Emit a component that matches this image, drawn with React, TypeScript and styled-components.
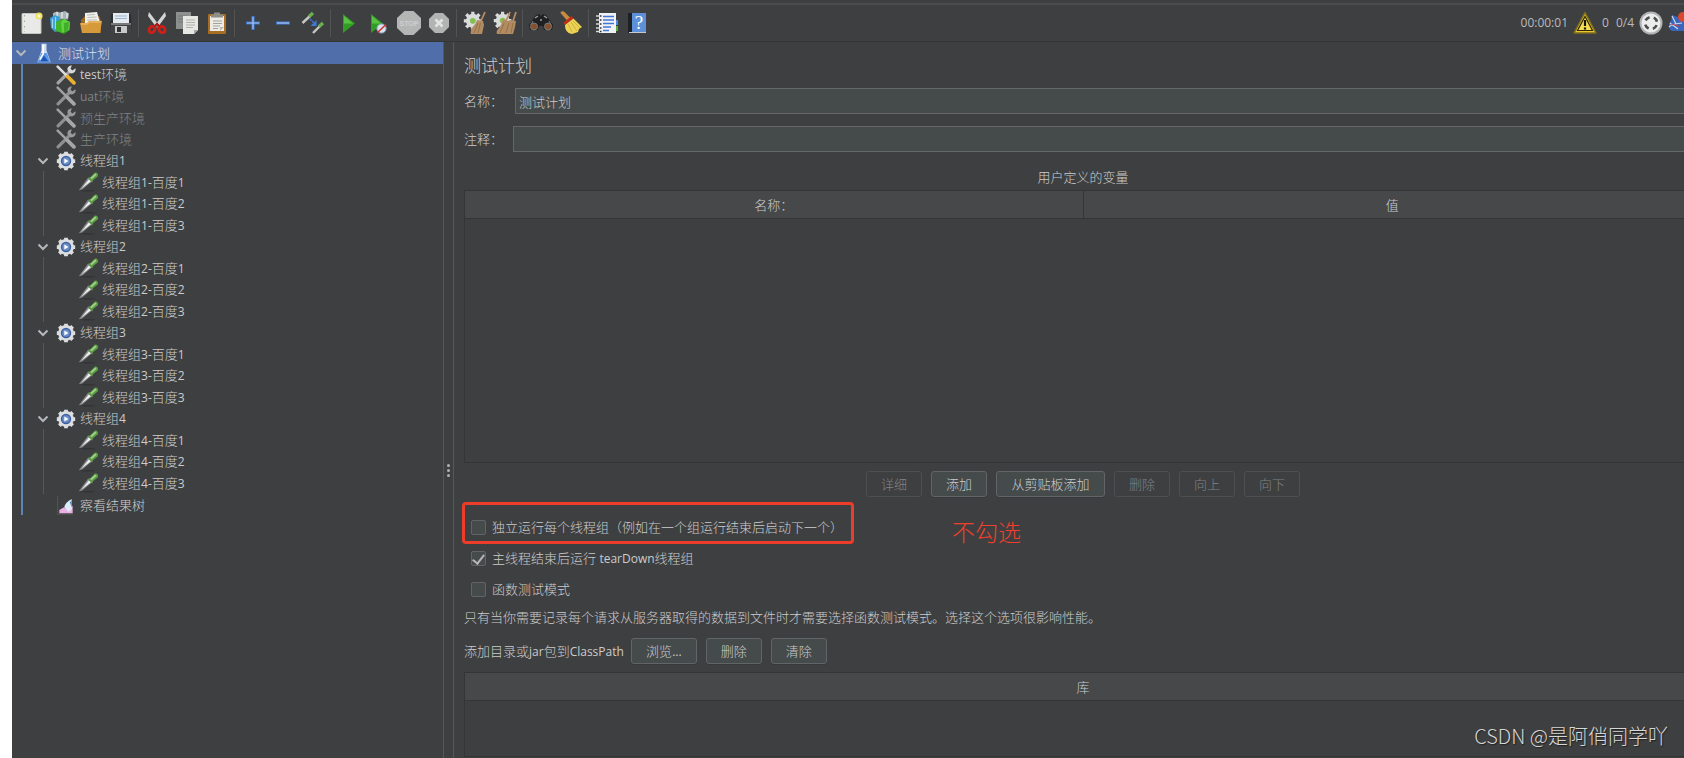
import React from "react";
import styled, { createGlobalStyle, css } from "styled-components";

const sans = '"Open Sans", "Noto Sans CJK SC", sans-serif';
const ink = "#cccccc";
const dim = "#808386";
const line = "#55585a";
const edge = "#333537";
const panel = "#3e3f41";
const field = "#454a4b";

const Global = createGlobalStyle`
  * { box-sizing: border-box; }
  html, body { margin: 0; background: #ffffff; }
  body { font: 300 13px/20px ${sans}; color: ${ink}; }
  button, input { font: inherit; color: inherit; }
`;

const Page = styled.div`
  min-height: 100vh;
  padding-left: 12px;
  display: flex;
  overflow: hidden;
`;

const Window = styled.div`
  position: relative;
  flex: 1;
  min-width: 0;
  display: flex;
  flex-direction: column;
  background: ${panel};
  overflow: hidden;
`;

const Toolbar = styled.header`
  display: flex;
  align-items: center;
  gap: 4px;
  height: 39px;
  margin-top: 3px;
  padding-left: 6px;
  border-top: 2px solid #4b4c4e;
  border-bottom: 1px solid ${edge};
`;

const ToolButton = styled.button`
  display: flex;
  align-items: center;
  justify-content: center;
  width: 26px;
  height: 28px;
  flex: none;
  padding: 0;
  border: 0;
  background: none;
`;

const Separator = styled.span`
  width: 2px;
  height: 28px;
  flex: none;
  border-left: 1px solid #515355;
`;

const Status = styled.div`
  display: flex;
  align-items: center;
  gap: 5px;
  flex: none;
  margin-left: auto;
  margin-right: -8px;
  font-weight: 400;
  font-size: 12px;
  color: #bbbbbb;
`;

const Threads = styled.span`
  margin-left: 2px;
`;

const Workspace = styled.div`
  flex: 1;
  display: flex;
  min-height: 0;
`;

const Tree = styled.ul`
  width: 431px;
  flex: none;
  margin: 0;
  padding: 0;
  list-style: none;
  display: grid;
  grid-auto-rows: 22px 21px;
  align-content: start;
`;

const TreeRow = styled.li<{ $selected?: boolean; $disabled?: boolean }>`
  display: flex;
  align-items: stretch;
  white-space: nowrap;
  background: ${(p) => (p.$selected ? "#506ea9" : "transparent")};
  color: ${(p) => (p.$disabled ? dim : p.$selected ? "#dde1e8" : ink)};
`;

const Guide = styled.span<{ $main?: boolean }>`
  width: 13px;
  margin-left: 9px;
  flex: none;
  border-left: ${(p) => (p.$main ? "2px solid #5d83b8" : "1px solid #55585a")};
`;

const Toggle = styled.button`
  width: 18px;
  flex: none;
  padding: 0;
  border: 0;
  background: none;
  display: flex;
  align-items: center;
  justify-content: center;
`;

const ToggleGap = styled.span`
  width: 18px;
  flex: none;
`;

const NodeIcon = styled.span`
  width: 20px;
  margin: 0 4px;
  flex: none;
  display: flex;
  align-items: center;
  justify-content: center;
`;

const NodeLabel = styled.span`
  align-self: center;
`;

const Divider = styled.div`
  width: 11px;
  flex: none;
  display: flex;
  flex-direction: column;
  align-items: center;
  gap: 2px;
  padding-top: 422px;
  border-left: 1px solid ${line};
  border-right: 1px solid ${line};
`;

const Dot = styled.span`
  width: 3px;
  height: 3px;
  border-radius: 50%;
  background: #b0b1b2;
`;

const Main = styled.main`
  position: relative;
  flex: 1;
  min-width: 0;
  display: flex;
  flex-direction: column;
  padding: 12px 0 2px 10px;
  margin-right: -18px;
`;

const Title = styled.h1`
  margin: 0 0 10px;
  font-size: 17px;
  line-height: 24px;
  font-weight: 300;
`;

const FieldRow = styled.div<{ $inset: number }>`
  display: grid;
  grid-template-columns: ${(p) => p.$inset}px 1fr;
  align-items: center;
  margin-bottom: 12px;
`;

const TextInput = styled.input`
  width: 100%;
  height: 26px;
  padding: 0 3px;
  background: ${field};
  border: 1px solid #646668;
  outline: 0;
`;

const TableFrame = styled.div<{ $grow?: boolean }>`
  border: 1px solid ${edge};
  ${(p) =>
    p.$grow
      ? css`
          flex: 1;
          min-height: 85px;
        `
      : css`
          height: 273px;
        `}
`;

const Table = styled.table`
  width: 100%;
  border-collapse: collapse;
  table-layout: fixed;
`;

const Head = styled.th`
  height: 27px;
  padding: 2px 0 0;
  font-weight: 300;
  background: #47484a;
  border-bottom: 1px solid ${edge};
  & + & {
    border-left: 1px solid ${edge};
  }
`;

const VariablesTitle = styled.h2`
  margin: 2px 0;
  font-size: 13px;
  line-height: 22px;
  font-weight: 300;
  text-align: center;
`;

const Actions = styled.div`
  display: flex;
  justify-content: center;
  gap: 9px;
  margin-top: 8px;
`;

const Button = styled.button<{ $width?: number }>`
  width: ${(p) => p.$width ?? 56}px;
  height: 26px;
  padding: 0;
  border: 1px solid #626567;
  border-radius: 3px;
  background: ${field};
  box-shadow: 0 1px 0 #37393b;
  line-height: 24px;
  &:disabled {
    color: ${dim};
    background: none;
    border-color: #4d4f51;
    box-shadow: none;
  }
`;

const Options = styled.div`
  display: flex;
  flex-direction: column;
  align-items: flex-start;
  margin-top: 5px;
`;

const Highlight = styled.div`
  display: flex;
  align-items: flex-end;
  width: 392px;
  height: 42px;
  margin-left: -2px;
  padding: 0 0 4px 6px;
  border: 3px solid #ee3c2b;
  border-radius: 4px;
`;

const Option = styled.label`
  display: flex;
  align-items: center;
  gap: 6px;
  height: 20px;
  white-space: nowrap;
`;

const PlainOption = styled(Option)`
  margin: 4px 0 0 7px;
  & + & {
    margin-top: 11px;
  }
`;

const Checkbox = styled.input`
  appearance: none;
  display: flex;
  justify-content: center;
  width: 15px;
  height: 15px;
  margin: 0;
  background: ${field};
  border: 1px solid #626567;
  border-radius: 2px;
  &:checked::after {
    content: "";
    width: 5px;
    height: 10px;
    border: solid #b4b6b7;
    border-width: 0 2px 2px 0;
    transform: rotate(38deg);
  }
`;

const Note = styled.p`
  margin: 8px 0 11px;
`;

const ClassPath = styled.div`
  display: flex;
  align-items: center;
  gap: 9px;
  margin-bottom: 8px;
`;

const ClassPathLabel = styled.span`
  margin-right: -2px;
`;

const Annotation = styled.span`
  position: absolute;
  left: 498px;
  top: 476px;
  font-size: 23px;
  line-height: 28px;
  font-weight: 300;
  color: #f0402c;
`;

const Watermark = styled.span`
  position: absolute;
  right: 16px;
  bottom: 9px;
  font: 300 20px/28px "Noto Sans CJK SC", sans-serif;
  color: #d6d6d6;
  text-shadow: 1px 1px 1px #222222;
`;

const Latin = styled.span`
  font-size: 12px;
  font-weight: 400;
`;

/* Latin letters and digits are set one size smaller than the Chinese text. */
function Mixed({ children }: { children: string }) {
  return (
    <>
      {children
        .split(/([A-Za-z0-9.-]+)/)
        .filter(Boolean)
        .map((part, i) => (/^[A-Za-z0-9.-]/.test(part) ? <Latin key={i}>{part}</Latin> : part))}
    </>
  );
}

const Svg = ({ size = 24, children }: { size?: number; children: React.ReactNode }) => (
  <svg width={size} height={size} viewBox="0 0 24 24" fill="none" aria-hidden="true">
    {children}
  </svg>
);

const NewIcon = () => (
  <Svg>
    <rect x="3" y="2.500" width="19" height="20" rx=".6" fill="#e9eae7" stroke="#c4c5c0" />
    <path d="M5.500 4v17" stroke="#a9aaa6" strokeDasharray="1.500 4" />
    <circle cx="20" cy="5" r="3.600" fill="#ecdf62" />
    <circle cx="20" cy="5" r="1.600" fill="#fffbd0" />
  </Svg>
);
const TemplatesIcon = () => (
  <Svg>
    <path d="M4 2l4-1.500 3 1 5-1.500 4 2.500-1 6H4z" fill="#a9b4b8" />
    <path d="M8 1v6M13 1v6M18 2v5" stroke="#dde3e4" strokeWidth="1.500" />
    <path d="M1 7l5-3 5 2v13l-5 2-4-4z" fill="#3aa0d8" />
    <path d="M3.500 8v9M6.500 6v12" stroke="#9bd8f4" strokeWidth="1.200" />
    <path d="M7 11l7-3 7 3v8l-6 4-8-3z" fill="#2d9a1f" />
    <path d="M7 11l7-3v14l-7-2z" fill="#43b52b" />
    <path d="M12 11l3-3 6 3-1 8-7 3z" fill="#62d13f" />
    <path d="M15 12l5-1-1 8-4 2z" fill="#3fae29" />
  </Svg>
);
const OpenIcon = () => (
  <Svg>
    <path d="M2 9l4-4h14l2 5v12H3z" fill="#9a6b24" />
    <path d="M6 2l12-1 3 11-15 1z" fill="#f1f1ee" />
    <path d="M8 4l8-.5M8.500 6.500l9-.5M8 9h10" stroke="#b9b9b5" />
    <path d="M1 12h7l2-2h13l-2 12H3z" fill="#d79a3b" />
    <path d="M2 13h6.500l2-2H22" stroke="#f2c67a" />
  </Svg>
);
const SaveIcon = () => (
  <Svg>
    <path d="M2 3h20l1 19H1z" fill="#2d2e30" />
    <path d="M2 13h20l1 9H1z" fill="#404244" />
    <path d="M4 2h16v10H4z" fill="#e4eaf0" />
    <path d="M6 5h12M6 7.500h12" stroke="#9db5cc" />
    <path d="M2 12h20v2H2z" fill="#77797b" />
    <path d="M6 15h12v7H6z" fill="#c8c9ca" />
    <path d="M8 16h4v5H8z" fill="#333333" />
  </Svg>
);
const CutIcon = () => (
  <Svg>
    <path d="M4 1l10 13-2.500 2.500L3 5zM20 1L10 14l2.500 2.500L21 5z" fill="#d3d5d5" />
    <ellipse cx="7" cy="18.500" rx="2.800" ry="3.400" transform="rotate(40 7 18.500)" stroke="#cf2018" strokeWidth="2.800" />
    <ellipse cx="17" cy="18.500" rx="2.800" ry="3.400" transform="rotate(-40 17 18.500)" stroke="#cf2018" strokeWidth="2.800" />
    <path d="M9 16l3-3 3 3" stroke="#b21912" strokeWidth="2" />
  </Svg>
);
const CopyIcon = () => (
  <Svg>
    <path d="M1 1h15v17H1z" fill="#8e9090" />
    <path d="M3 5h9M3 8h6M3 11h6" stroke="#747676" />
    <path d="M8 5h15v14l-4 4H8z" fill="#e6e6e3" />
    <path d="M11 9h9M11 11.500h9M11 14h9M11 16.500h7" stroke="#b0b1af" />
    <path d="M19 23v-4h4z" fill="#a8a9a7" />
  </Svg>
);
const PasteIcon = () => (
  <Svg>
    <rect x="3" y="3" width="18" height="20" rx="1" fill="#a86f22" />
    <path d="M5 5h14v15H5z" fill="#ecebe6" />
    <path d="M9 1.500h6v2h3v3H6v-3h3z" fill="#8d8f86" />
    <path d="M8 10h9M8 12.500h9M8 15h7M8 17.500h5" stroke="#a3a39d" />
    <path d="M15 20v-4h4z" fill="#b9b8b2" />
  </Svg>
);
const PlusIcon = () => (
  <Svg>
    <path d="M12 5v14M5 12h14" stroke="#3d73c8" strokeWidth="3.200" />
    <path d="M12 6v12M6 12h12" stroke="#a8c6f0" strokeWidth="1.200" />
  </Svg>
);
const MinusIcon = () => (
  <Svg>
    <path d="M5 12h14" stroke="#3d73c8" strokeWidth="3.200" />
    <path d="M6 12h12" stroke="#a8c6f0" strokeWidth="1.200" />
  </Svg>
);
const ToggleIcon = () => (
  <Svg>
    <path d="M1.500 12L9 5" stroke="#c4c7c4" strokeWidth="2.400" />
    <path d="M8 5.500L12 2" stroke="#69b04e" strokeWidth="3.400" />
    <path d="M12 22l7-7" stroke="#c4c7c4" strokeWidth="2.400" />
    <path d="M18 15.500l4-3.500" stroke="#69b04e" strokeWidth="3.400" />
    <path d="M9 8l5 5" stroke="#3b7ae0" strokeWidth="1.500" strokeDasharray="2 1" />
    <path d="M15.500 9v6h-6z" fill="#3b7ae0" />
  </Svg>
);
const StartIcon = () => (
  <Svg>
    <path d="M6 3l12 9.500L6 22z" fill="#2f9e22" />
    <path d="M7 5l9 7.500H7z" fill="#59c143" />
  </Svg>
);
const StartNoPauseIcon = () => (
  <Svg>
    <path d="M4 3l12 9.500L4 22z" fill="#2f9e22" />
    <path d="M5 5l9 7.500H5z" fill="#59c143" />
    <circle cx="14.500" cy="17.500" r="4.600" fill="#d7e1ee" stroke="#89a3c4" />
    <path d="M10.500 21.500l8.500-8" stroke="#d22d22" strokeWidth="1.500" />
  </Svg>
);
const StopText = styled.text`
  font: 700 7px "Liberation Sans", sans-serif;
`;
const StopIcon = () => (
  <Svg>
    <path d="M7.500 0h9L24 7v10l-7.500 7h-9L0 17V7z" fill="#b4b5b5" />
    <StopText x="12" y="14.500" textAnchor="middle" fill="#cfcfcf">
      STOP
    </StopText>
  </Svg>
);
const ShutdownIcon = () => (
  <Svg>
    <path d="M8 2h8l6 6v8l-6 6H8l-6-6V8z" fill="#b2b3b3" />
    <path d="M8.500 8.500l7 7M15.500 8.500l-7 7" stroke="#e3e3e3" strokeWidth="2.600" />
  </Svg>
);
const gearTeeth = "M18 12h5M16 16l4 4M12 18v5M8 16l-4 4M6 12H1M8 8L4 4M12 6V1M16 8l4-4";
const ClearIcon = () => (
  <Svg>
    <g transform="scale(.82)">
      <path d={gearTeeth} stroke="#dadbdb" strokeWidth="4" />
      <circle cx="12" cy="12" r="8.500" fill="#dadbdb" />
      <circle cx="12" cy="12" r="3.500" fill="#84bf52" />
    </g>
    <path d="M22 1l-4 9" stroke="#b98c5c" strokeWidth="1.800" />
    <path d="M14 9l6 1 1 4-2 9H8c-1-1 0-4 1-6 2-3 4-4 5-8z" fill="#b18c62" />
    <path d="M15 12l-4 10M17.500 12L15 22" stroke="#94714b" />
  </Svg>
);
const ClearAllIcon = () => (
  <Svg>
    <g transform="scale(.8)">
      <path d={gearTeeth} stroke="#dadbdb" strokeWidth="4" />
      <circle cx="12" cy="12" r="8.500" fill="#dadbdb" />
      <circle cx="12" cy="12" r="3.500" fill="#84bf52" />
    </g>
    <path d="M17 1l-4 9M23 1l-3 9" stroke="#b98c5c" strokeWidth="1.800" />
    <path d="M10 8l5 2 2-1 6 1-1 6-2 7H4c-1-2 0-4 2-6 2-3 3-5 4-9z" fill="#b18c62" />
    <path d="M11 12L7 22M16 12l-3 10M20 12l-2 10" stroke="#94714b" />
  </Svg>
);
const SearchIcon = () => (
  <Svg>
    <path d="M7 4l3-1 2 2 2-2 3 1 7 10-1 5h-8l-1-4h-4l-1 4H1l-1-5z" fill="#1f2021" />
    <path d="M6 7l3-2M15 5l3 2M11 9h2" stroke="#9a9c9e" strokeWidth="1.500" />
    <path d="M4 10l-2 4M20 10l2 4" stroke="#696b6d" strokeWidth="1.200" />
    <circle cx="5" cy="15.500" r="3.500" fill="#87502c" stroke="#77797b" />
    <circle cx="19" cy="15.500" r="3.500" fill="#87502c" stroke="#77797b" />
  </Svg>
);
const BroomIcon = () => (
  <Svg>
    <path d="M1.500 2c0-2 3-2 4-1l6 6-3 3z" fill="#c98a42" />
    <path d="M4.500 11.500L12.500 5l2 2.500L6 14z" fill="#c22c1b" />
    <path d="M6 14l8.500-6.500L23 16l-3 2-1 3-6 2c-5-1-7-4-7-9z" fill="#ecd353" />
    <path d="M9 13l4 8M12 11l6 9M14 10l7 7" stroke="#d0b03c" />
  </Svg>
);
const FunctionIcon = () => (
  <Svg>
    <path d="M20 9h3v5h-3z" fill="#4a87e0" />
    <path d="M20 15h3v5h-3z" fill="#53ae3c" />
    <path d="M4 2h17v20H4z" fill="#f0f2f5" />
    <path d="M8 5.500h11M8 9h11M8 12.500h11M8 16h8M8 19.500h6" stroke="#4176d4" strokeWidth="1.500" />
    <path d="M1 5h5M1 9h5M1 13h5M1 17h5M1 20.500h5" stroke="#d7d8d9" strokeWidth="1.500" />
    <path d="M5 5h1.500M5 9h1.500M5 13h1.500M5 17h1.500M5 20.500h1.500" stroke="#333537" strokeWidth="1.500" />
  </Svg>
);
const HelpText = styled.text`
  font: 400 19px "Liberation Serif", serif;
`;
const HelpIcon = () => (
  <Svg>
    <path d="M3 2h17l1 20H3z" fill="#1d2024" />
    <path d="M7 2h14v20H7z" fill="#5c90d9" />
    <path d="M4 21.500h17" stroke="#c4cad2" />
    <HelpText x="14" y="18" textAnchor="middle" fill="#ffffff">
      ?
    </HelpText>
  </Svg>
);
const WarningIcon = () => (
  <Svg>
    <path d="M12 1.500l11 20.500H1z" fill="#e9c72f" stroke="#7d6d1c" strokeWidth="1.500" strokeLinejoin="round" />
    <path d="M12 5.500l7.500 14h-15z" fill="#f4dc55" stroke="#2c2708" strokeWidth="1.200" />
    <path d="M12 9v6M12 16.500v2" stroke="#171505" strokeWidth="2.200" />
  </Svg>
);
const TargetIcon = () => (
  <Svg>
    <circle cx="12" cy="12" r="11.500" fill="#b1b2b2" />
    <circle cx="12" cy="12" r="9.500" fill="#ececec" />
    <circle cx="12" cy="12" r="6" stroke="#4a4b4c" strokeWidth="2.600" strokeDasharray="5 4.425" strokeDashoffset="-2.200" />
  </Svg>
);
const RemoteIcon = () => (
  <Svg>
    <path d="M4 4l9 3 8 6-5 7H4c-4-2-4-8-1-10z" fill="#3866bd" />
    <path d="M4 5l4 8M1 16c4-4 8-3 13-4M2 12l8 6" stroke="#c9d8ef" strokeWidth="1.200" />
    <path d="M3 13l8 2" stroke="#cc4444" strokeWidth="1.200" />
    <circle cx="15" cy="6" r="5" fill="#d9472f" />
  </Svg>
);

const ChevronIcon = () => (
  <Svg size={12}>
    <path d="M3 7l9 9 9-9" stroke="#b5b8ba" strokeWidth="4" />
  </Svg>
);
const FlaskIcon = () => (
  <Svg size={20}>
    <path d="M9 1h6v8l5 14H4L9 9z" fill="#d3deed" />
    <path d="M8.500 12h7l4 11h-15z" fill="#5b96e6" />
    <path d="M11 2v11l-4 7" stroke="#ffffff" strokeWidth="2" />
    <path d="M12 15l5 7H8z" fill="#1c54b4" />
  </Svg>
);
const ToolsIcon = ({ disabled }: { disabled?: boolean }) => (
  <Svg size={20}>
    <path d="M2.500 21.500L17 7" stroke={disabled ? "#8f9091" : "#a3a5a5"} strokeWidth="3.800" strokeLinecap="round" />
    <path d="M2 2l12 12" stroke={disabled ? "#a0a1a2" : "#dcdddd"} strokeWidth="3" strokeLinecap="round" />
    <path d="M14 14l7.500 7.500" stroke={disabled ? "#a5a6a7" : "#eab02e"} strokeWidth="4.400" strokeLinecap="round" />
    <path d="M19 .5c-4 0-6 3-5 6l3 3.500c4 1 7-2 6.500-6l-4 2.500-2-2z" fill={disabled ? "#999a9b" : "#d9dada"} />
  </Svg>
);
const GearIcon = () => (
  <Svg size={20}>
    <path d={gearTeeth} stroke="#dcdee0" strokeWidth="4.500" />
    <circle cx="12" cy="12" r="9.500" fill="#dcdee0" />
    <circle cx="12" cy="12" r="6.200" fill="#3c5f9f" />
    <circle cx="12" cy="12" r="4.500" fill="#6c8fc9" />
    <path d="M10 9l5 3-5 3z" fill="#ffffff" />
  </Svg>
);
const DropperIcon = () => (
  <Svg size={20}>
    <ellipse cx="12" cy="22.500" rx="9" ry="1" fill="#333436" />
    <path d="M1 22L12 7l5 4L5 21z" fill="#8a8c8c" />
    <path d="M4 20l9-11 2.500 2z" fill="#f0f1f0" />
    <path d="M12 7l3-1 5-5c2-1 5 1 4 4l-6 5-1 3z" fill="#5c9c46" />
    <path d="M15.500 8l6-5.500" stroke="#a3d48c" strokeWidth="2.200" />
  </Svg>
);
const ResultsIcon = () => (
  <Svg size={20}>
    <path d="M2 1v22h18" stroke="#66696b" strokeDasharray="2 1" />
    <path d="M4 22v-4l5-3 5 2 6-4v9z" fill="#e9b0e4" />
    <path d="M10 15c0-4 5-9 9-10v12l-4 3z" fill="#dfebf7" />
    <path d="M16.500 9l2.500-3v9z" fill="#4f8fd0" />
  </Svg>
);

const toolGroups: { name: string; icon: React.ReactNode }[][] = [
  [
    { name: "新建", icon: <NewIcon /> },
    { name: "模板", icon: <TemplatesIcon /> },
    { name: "打开", icon: <OpenIcon /> },
    { name: "保存", icon: <SaveIcon /> },
  ],
  [
    { name: "剪切", icon: <CutIcon /> },
    { name: "复制", icon: <CopyIcon /> },
    { name: "粘贴", icon: <PasteIcon /> },
  ],
  [
    { name: "展开", icon: <PlusIcon /> },
    { name: "折叠", icon: <MinusIcon /> },
    { name: "切换", icon: <ToggleIcon /> },
  ],
  [
    { name: "启动", icon: <StartIcon /> },
    { name: "不停顿开始", icon: <StartNoPauseIcon /> },
    { name: "停止", icon: <StopIcon /> },
    { name: "关闭", icon: <ShutdownIcon /> },
  ],
  [
    { name: "清除", icon: <ClearIcon /> },
    { name: "清除全部", icon: <ClearAllIcon /> },
  ],
  [
    { name: "查找", icon: <SearchIcon /> },
    { name: "重置搜索", icon: <BroomIcon /> },
  ],
  [
    { name: "函数助手", icon: <FunctionIcon /> },
    { name: "帮助", icon: <HelpIcon /> },
  ],
];

type Node = {
  label: string;
  depth: number;
  icon: React.ReactNode;
  open?: boolean;
  selected?: boolean;
  disabled?: boolean;
};

const nodes: Node[] = [
  { label: "测试计划", depth: 0, icon: <FlaskIcon />, open: true, selected: true },
  { label: "test环境", depth: 1, icon: <ToolsIcon /> },
  { label: "uat环境", depth: 1, icon: <ToolsIcon disabled />, disabled: true },
  { label: "预生产环境", depth: 1, icon: <ToolsIcon disabled />, disabled: true },
  { label: "生产环境", depth: 1, icon: <ToolsIcon disabled />, disabled: true },
  ...[1, 2, 3, 4].flatMap((g): Node[] => [
    { label: `线程组${g}`, depth: 1, icon: <GearIcon />, open: true },
    ...[1, 2, 3].map((n) => ({ label: `线程组${g}-百度${n}`, depth: 2, icon: <DropperIcon /> })),
  ]),
  { label: "察看结果树", depth: 1, icon: <ResultsIcon /> },
];

export default function App() {
  return (
    <Page>
      <Global />
      <Window>
        <Toolbar>
          {toolGroups.map((group, i) => (
            <React.Fragment key={i}>
              {i > 0 && <Separator />}
              {group.map((tool) => (
                <ToolButton key={tool.name} aria-label={tool.name}>
                  {tool.icon}
                </ToolButton>
              ))}
            </React.Fragment>
          ))}
          <Status>
            <span>00:00:01</span>
            <WarningIcon />
            <span>0</span>
            <Threads>0/4</Threads>
            <TargetIcon />
            <RemoteIcon />
          </Status>
        </Toolbar>
        <Workspace>
          <Tree>
            {nodes.map((node) => (
              <TreeRow key={node.label} $selected={node.selected} $disabled={node.disabled}>
                {node.depth > 0 && <Guide $main />}
                {node.depth > 1 && <Guide />}
                {node.open ? (
                  <Toggle aria-label={`折叠 ${node.label}`}>
                    <ChevronIcon />
                  </Toggle>
                ) : (
                  <ToggleGap />
                )}
                <NodeIcon>{node.icon}</NodeIcon>
                <NodeLabel>
                  <Mixed>{node.label}</Mixed>
                </NodeLabel>
              </TreeRow>
            ))}
          </Tree>
          <Divider>
            <Dot />
            <Dot />
            <Dot />
          </Divider>
          <Main>
            <Title>测试计划</Title>
            <FieldRow $inset={51}>
              <label htmlFor="plan-name">名称：</label>
              <TextInput id="plan-name" defaultValue="测试计划" />
            </FieldRow>
            <FieldRow $inset={49}>
              <label htmlFor="plan-comment">注释：</label>
              <TextInput id="plan-comment" />
            </FieldRow>
            <VariablesTitle id="variables">用户定义的变量</VariablesTitle>
            <TableFrame>
              <Table aria-labelledby="variables">
                <thead>
                  <tr>
                    <Head>名称：</Head>
                    <Head>值</Head>
                  </tr>
                </thead>
              </Table>
            </TableFrame>
            <Actions>
              <Button disabled>详细</Button>
              <Button>添加</Button>
              <Button $width={109}>从剪贴板添加</Button>
              <Button disabled>删除</Button>
              <Button disabled>向上</Button>
              <Button disabled>向下</Button>
            </Actions>
            <Options>
              <Highlight>
                <Option>
                  <Checkbox type="checkbox" />
                  独立运行每个线程组（例如在一个组运行结束后启动下一个）
                </Option>
              </Highlight>
              <PlainOption>
                <Checkbox type="checkbox" defaultChecked />
                <span>
                  <Mixed>主线程结束后运行 tearDown线程组</Mixed>
                </span>
              </PlainOption>
              <PlainOption>
                <Checkbox type="checkbox" />
                函数测试模式
              </PlainOption>
            </Options>
            <Note>只有当你需要记录每个请求从服务器取得的数据到文件时才需要选择函数测试模式。选择这个选项很影响性能。</Note>
            <ClassPath>
              <ClassPathLabel>
                <Mixed>添加目录或jar包到ClassPath</Mixed>
              </ClassPathLabel>
              <Button $width={66}>
                <Mixed>浏览...</Mixed>
              </Button>
              <Button>删除</Button>
              <Button>清除</Button>
            </ClassPath>
            <TableFrame $grow>
              <Table>
                <thead>
                  <tr>
                    <Head>库</Head>
                  </tr>
                </thead>
              </Table>
            </TableFrame>
            <Annotation>不勾选</Annotation>
          </Main>
        </Workspace>
        <Watermark>CSDN @是阿俏同学吖</Watermark>
      </Window>
    </Page>
  );
}
